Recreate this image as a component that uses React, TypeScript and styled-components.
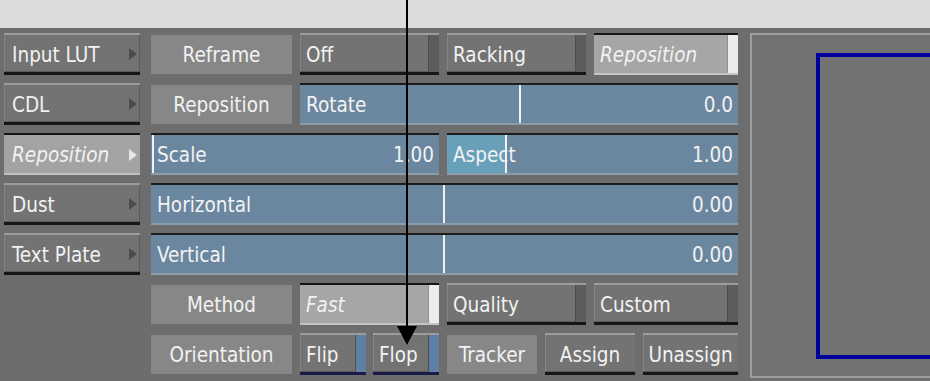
import React from "react";
import styled, { createGlobalStyle, css } from "styled-components";

const GlobalStyle = createGlobalStyle`
  html, body {
    margin: 0;
    padding: 0;
    background: #6d6d6d;
  }
  body {
    font-family: "DejaVu Sans Condensed", "DejaVu Sans", sans-serif;
    font-stretch: condensed;
  }
`;

const Screen = styled.div`
  position: relative;
  width: 930px;
  height: 381px;
  overflow: hidden;
  background: #6d6d6d;
`;

const TopBar = styled.div`
  height: 28px;
  background: #dcdcdc;
`;

const Main = styled.div`
  display: flex;
  align-items: flex-start;
  padding: 5px 0 0 4px;
`;

const SideMenu = styled.div`
  display: flex;
  flex-direction: column;
  gap: 8px;
  width: 136px;
`;

const text = css`
  color: #f2f2f2;
  font-size: 20.5px;
  line-height: 1;
  white-space: nowrap;
  box-sizing: border-box;
`;

const MenuButton = styled.div<{ $selected?: boolean }>`
  ${text}
  height: 42px;
  display: flex;
  align-items: center;
  justify-content: space-between;
  padding: 3px 3px 0 8px;
  ${({ $selected }) =>
    $selected
      ? css`
          background: #a3a3a3;
          border-top: 2px solid #161616;
          border-bottom: 2px solid #c2c2c2;
          font-style: italic;
        `
      : css`
          background: #737373;
          border-top: 2px solid #9c9c9c;
          border-bottom: 3px solid #161616;
          box-shadow: inset 0 -1px 0 #5a5a5a, inset -1px 0 0 #5a5a5a,
            inset 1px 0 0 #858585;
        `}
`;

const Caret = styled.span<{ $light?: boolean }>`
  width: 0;
  height: 0;
  margin-top: -2px;
  border-top: 6px solid transparent;
  border-bottom: 6px solid transparent;
  border-left: 8px solid ${({ $light }) => ($light ? "#e6e6e6" : "#4c4c4c")};
`;

const ControlGrid = styled.div`
  display: grid;
  grid-template-columns: 141px 139px 139px 144px;
  grid-auto-rows: 42px;
  gap: 8px;
  margin-left: 11px;
`;

const FlatLabel = styled.div`
  ${text}
  align-self: center;
  height: 39px;
  background: #878787;
  display: flex;
  align-items: center;
  justify-content: center;
  padding: 3px 6px 0;
`;

type Strip = "dark" | "light" | "blue" | "none";

const stripColor: Record<Strip, string> = {
  dark: "#5d5d5d",
  light: "#ececec",
  blue: "#5f7fa4",
  none: "transparent",
};

const Choice = styled.div<{ $active?: boolean; $strip: Strip }>`
  ${text}
  position: relative;
  display: flex;
  align-items: center;
  padding: 3px ${({ $strip }) => ($strip === "none" ? "6px" : "16px")} 0 6px;
  justify-content: ${({ $strip }) => ($strip === "none" ? "center" : "flex-start")};
  ${({ $active }) =>
    $active
      ? css`
          background: #a6a6a6;
          border-top: 2px solid #161616;
          border-bottom: 2px solid #c4c4c4;
          font-style: italic;
        `
      : css`
          background: #737373;
          border-top: 2px solid #9c9c9c;
          border-bottom: 3px solid #161616;
          box-shadow: inset 0 -1px 0 #5a5a5a, inset 1px 0 0 #858585;
        `}
  ${({ $strip }) =>
    $strip === "blue" &&
    css`
      border-bottom-color: #1a1a4a;
    `}

  &::after {
    content: "";
    position: absolute;
    top: 0;
    right: 0;
    bottom: 0;
    width: 10px;
    background: ${({ $strip }) => stripColor[$strip]};
    border-left: ${({ $strip }) =>
      $strip === "none" ? "none" : `1px solid ${$strip === "light" ? "#8e8e8e" : "#4e4e4e"}`};
  }
`;

const ChoiceRow = styled.div`
  grid-column: 3 / 5;
  display: grid;
  grid-template-columns: 90px 90px 95px;
  gap: 8px;
`;

const PairRow = styled.div`
  display: grid;
  grid-template-columns: 66px 66px;
  gap: 7px;
`;

const Slider = styled.div<{ $col: string }>`
  ${text}
  grid-column: ${({ $col }) => $col};
  position: relative;
  display: flex;
  align-items: center;
  justify-content: space-between;
  padding: 3px 5px 0 6px;
  background: #6b87a0;
  border-top: 2px solid #1c1c1c;
  border-bottom: 2px solid #8b9caa;
  overflow: hidden;
`;

const SliderFill = styled.div`
  position: absolute;
  top: 0;
  bottom: 0;
  left: 0;
  background: #67a0b8;
`;

const SliderMark = styled.div`
  position: absolute;
  top: 0;
  bottom: 0;
  width: 2px;
  background: #eef2f5;
`;

const SliderText = styled.span`
  position: relative;
`;

const Preview = styled.div`
  margin-left: 12px;
  flex: 1;
  height: 345px;
  box-sizing: border-box;
  border-left: 2px solid #9e9e9e;
  border-top: 2px solid #9e9e9e;
  border-bottom: 2px solid #9e9e9e;
  background: #727272;
  padding: 18px 0 0 64px;
  overflow: hidden;
`;

const Frame = styled.div`
  width: 200px;
  height: 306px;
  box-sizing: border-box;
  border: 4px solid #00009c;
`;

const PointerLine = styled.div`
  position: absolute;
  left: 406px;
  top: 0;
  width: 2px;
  height: 328px;
  background: #000;
`;

const PointerHead = styled.div`
  position: absolute;
  left: 397px;
  top: 326px;
  width: 0;
  height: 0;
  border-left: 10.5px solid transparent;
  border-right: 10.5px solid transparent;
  border-top: 19px solid #000;
`;

const menu = [
  { label: "Input LUT" },
  { label: "CDL" },
  { label: "Reposition", selected: true },
  { label: "Dust" },
  { label: "Text Plate" },
];

interface SliderData {
  label: string;
  value: string;
  col: string;
  mark: number;
  fill?: number;
}

const sliders: Record<string, SliderData> = {
  rotate: { label: "Rotate", value: "0.0", col: "2 / 5", mark: 50 },
  scale: { label: "Scale", value: "1.00", col: "1 / 3", mark: 0.3 },
  aspect: { label: "Aspect", value: "1.00", col: "3 / 5", mark: 20, fill: 20 },
  horizontal: { label: "Horizontal", value: "0.00", col: "1 / 5", mark: 49.7 },
  vertical: { label: "Vertical", value: "0.00", col: "1 / 5", mark: 49.7 },
};

const SliderField: React.FC<{ data: SliderData }> = ({ data }) => (
  <Slider $col={data.col}>
    {data.fill !== undefined && <SliderFill style={{ width: `${data.fill}%` }} />}
    <SliderMark style={{ left: `${data.mark}%` }} />
    <SliderText>{data.label}</SliderText>
    <SliderText>{data.value}</SliderText>
  </Slider>
);

const App: React.FC = () => {
  return (
    <Screen>
      <GlobalStyle />
      <TopBar />
      <Main>
        <SideMenu>
          {menu.map((item) => (
            <MenuButton key={item.label} $selected={item.selected}>
              <span>{item.label}</span>
              <Caret $light={item.selected} />
            </MenuButton>
          ))}
        </SideMenu>

        <ControlGrid>
          <FlatLabel>Reframe</FlatLabel>
          <Choice $strip="dark">Off</Choice>
          <Choice $strip="dark">Racking</Choice>
          <Choice $strip="light" $active>
            Reposition
          </Choice>

          <FlatLabel>Reposition</FlatLabel>
          <SliderField data={sliders.rotate} />

          <SliderField data={sliders.scale} />
          <SliderField data={sliders.aspect} />

          <SliderField data={sliders.horizontal} />
          <SliderField data={sliders.vertical} />

          <FlatLabel>Method</FlatLabel>
          <Choice $strip="light" $active>
            Fast
          </Choice>
          <Choice $strip="dark">Quality</Choice>
          <Choice $strip="dark">Custom</Choice>

          <FlatLabel>Orientation</FlatLabel>
          <PairRow>
            <Choice $strip="blue">Flip</Choice>
            <Choice $strip="blue">Flop</Choice>
          </PairRow>
          <ChoiceRow>
            <FlatLabel>Tracker</FlatLabel>
            <Choice $strip="none">Assign</Choice>
            <Choice $strip="none">Unassign</Choice>
          </ChoiceRow>
        </ControlGrid>

        <Preview>
          <Frame />
        </Preview>
      </Main>
      <PointerLine />
      <PointerHead />
    </Screen>
  );
};

export default App;
